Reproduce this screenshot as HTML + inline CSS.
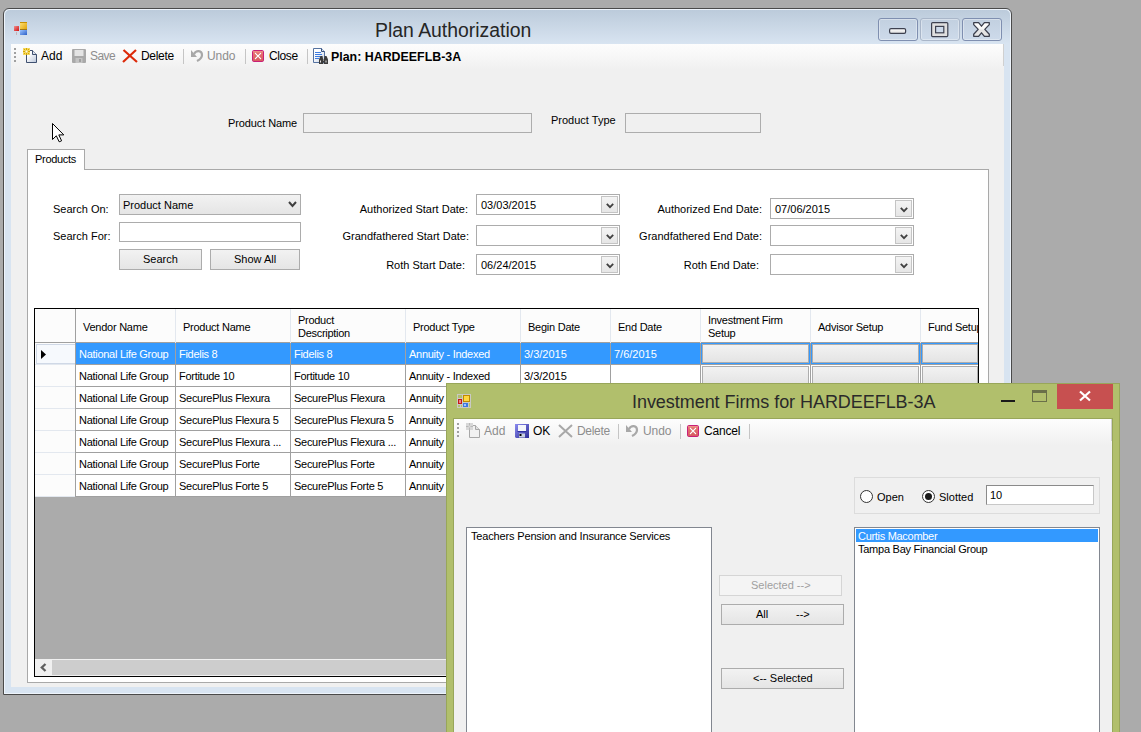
<!DOCTYPE html><html><head><meta charset="utf-8"><style>
html,body{margin:0;padding:0;}
body{width:1141px;height:732px;overflow:hidden;background:#ababab;position:relative;font-family:"Liberation Sans",sans-serif;}
.a{position:absolute;box-sizing:border-box;}
.t{position:absolute;white-space:pre;line-height:normal;font-family:"Liberation Sans",sans-serif;}
svg{position:absolute;overflow:visible;}
</style></head><body>
<div class="a" style="left:3px;top:8px;width:1009px;height:687px;border:1px solid #4a4a4a;border-radius:6px 6px 0 0;background:#d8e4f1;box-shadow:inset 0 0 0 1px #eef4fb;"></div>
<div class="a" style="left:5px;top:10px;width:1005px;height:34px;border-radius:5px 5px 0 0;background:linear-gradient(#bccbdb,#d8e4f1);"></div>
<div class="a" style="left:11px;top:44px;width:993px;height:643px;background:#f0f0f0;"></div>
<div class="a" style="left:11px;top:44px;width:993px;height:26px;background:linear-gradient(#fdfdfd 0%,#f8f8f8 40%,#f0f0f0 100%);"></div>
<div class="a" style="left:1003px;top:44px;width:1px;height:22px;background:#d0d0d0;"></div>
<svg style="left:14px;top:21px" width="14" height="15" viewBox="0 0 14 15"><defs><linearGradient id="gy" x1="0" y1="0" x2="1" y2="1"><stop offset="0" stop-color="#fde27a"/><stop offset="1" stop-color="#e0a000"/></linearGradient><linearGradient id="gb" x1="0" y1="0" x2="1" y2="1"><stop offset="0" stop-color="#9cc4ff"/><stop offset="1" stop-color="#2b5fc8"/></linearGradient><linearGradient id="gr" x1="0" y1="0" x2="1" y2="1"><stop offset="0" stop-color="#f09090"/><stop offset="1" stop-color="#d01010"/></linearGradient></defs><rect x="0" y="5" width="5" height="5" fill="url(#gr)"/><rect x="2" y="11" width="1" height="3" fill="#c8b4b8"/><rect x="6" y="1" width="7" height="8" fill="url(#gy)"/><rect x="6" y="1" width="7" height="1" fill="#c89000"/><rect x="6" y="8" width="7" height="1" fill="#a07818"/><rect x="6" y="9" width="7" height="5" fill="url(#gb)"/></svg>
<div class="t" style="left:375px;top:19px;font-size:19.4px;color:#262626;">Plan Authorization</div>
<div class="a" style="left:878px;top:18px;width:40px;height:23px;border:1px solid #7f8fb0;border-radius:3px;background:linear-gradient(#c2d0e0,#cddaea);box-shadow:inset 0 0 0 1px rgba(255,255,255,0.35);"></div>
<div class="a" style="left:920px;top:18px;width:40px;height:23px;border:1px solid #a9b6c9;border-radius:3px;background:linear-gradient(#c2d0e0,#cddaea);box-shadow:inset 0 0 0 1px rgba(255,255,255,0.35);"></div>
<div class="a" style="left:962px;top:18px;width:40px;height:23px;border:1px solid #7f8fb0;border-radius:3px;background:linear-gradient(#c2d0e0,#cddaea);box-shadow:inset 0 0 0 1px rgba(255,255,255,0.35);"></div>
<svg style="left:889px;top:28px" width="18" height="8"><defs><linearGradient id="gm" x1="0" y1="0" x2="0" y2="1"><stop offset="0" stop-color="#ffffff"/><stop offset="1" stop-color="#dedede"/></linearGradient></defs><rect x="0.6" y="0.6" width="16" height="4.8" rx="1.4" fill="url(#gm)" stroke="#3d4150" stroke-width="1.2"/></svg>
<svg style="left:931px;top:22px" width="18" height="16"><rect x="0.6" y="0.6" width="16.2" height="14" rx="1" fill="#dfdfdf" stroke="#3d4150" stroke-width="1.2"/><rect x="4.6" y="4.4" width="8.2" height="6.4" fill="#cddaea" stroke="#3d4150" stroke-width="1.2"/></svg>
<svg style="left:973px;top:22px" width="18" height="16" viewBox="0 0 18 16"><defs><linearGradient id="gx" x1="0" y1="0" x2="0" y2="1"><stop offset="0" stop-color="#ffffff"/><stop offset="0.45" stop-color="#f6f6f6"/><stop offset="0.55" stop-color="#e2e2e2"/><stop offset="1" stop-color="#e6e6e6"/></linearGradient></defs><path d="M0.7,0.7 L5.6,0.7 L8.5,4.2 L11.4,0.7 L16.3,0.7 L16.3,2.6 L11.8,7.4 L16.3,12.3 L16.3,14.3 L11.4,14.3 L8.5,10.8 L5.6,14.3 L0.7,14.3 L0.7,12.3 L5.2,7.4 L0.7,2.6 Z" fill="url(#gx)" stroke="#3b3f4d" stroke-width="1.3" stroke-linejoin="round"/></svg>
<div class="a" style="left:14px;top:48px;width:2px;height:2px;background:#a0a0a0;"></div>
<div class="a" style="left:14px;top:52px;width:2px;height:2px;background:#a0a0a0;"></div>
<div class="a" style="left:14px;top:56px;width:2px;height:2px;background:#a0a0a0;"></div>
<div class="a" style="left:14px;top:60px;width:2px;height:2px;background:#a0a0a0;"></div>
<svg style="left:22px;top:48px" width="16" height="16" viewBox="0 0 16 16"><defs><linearGradient id="gp" x1="0" y1="0" x2="1" y2="1"><stop offset="0.3" stop-color="#ffffff"/><stop offset="1" stop-color="#b8c4d8"/></linearGradient></defs><path d="M4.5,2.5 H10.5 L14.5,6.5 V14.5 H4.5 Z" fill="url(#gp)" stroke="#3f5070" stroke-width="1" stroke-linejoin="round"/><path d="M10.5,2.5 V6.5 H14.5" fill="#dde3ee" stroke="#3f5070" stroke-width="1"/><rect x="1" y="0" width="7" height="7" fill="#f4d860"/><g stroke="#d9a800" stroke-width="1"><path d="M4.5,0 V2.5 M4.5,4.5 V7 M1,3.5 H3.5 M5.5,3.5 H8 M2,1 L3.5,2.5 M7,1 L5.5,2.5 M2,6 L3.5,4.5 M7,6 L5.5,4.5"/></g><rect x="3.5" y="2.5" width="2" height="2" fill="#fffbe8"/></svg>
<div class="t" style="left:41px;top:49px;font-size:12px;color:#000;">Add</div>
<svg style="left:72px;top:49px" width="14" height="14" viewBox="0 0 14 14"><rect x="0" y="0" width="14" height="14" rx="1" fill="#a9a9a9"/><rect x="2.5" y="1" width="9" height="6" fill="#e4e4e4"/><rect x="3.5" y="9" width="7" height="5" fill="#c4c4c4"/><rect x="7" y="10" width="2" height="3" fill="#a0a0a0"/></svg>
<div class="t" style="left:90px;top:49px;font-size:12px;color:#8d8d8d;letter-spacing:-0.6px;">Save</div>
<svg style="left:122px;top:49px" width="16" height="14"><path d="M1.5,1 L15,13 M14,1 L1,13" stroke="#dc2a0a" stroke-width="2.2"/></svg>
<div class="t" style="left:141px;top:49px;font-size:12px;color:#000;letter-spacing:-0.3px;">Delete</div>
<div class="a" style="left:183px;top:49px;width:1px;height:15px;background:#c5c5c5;"></div>
<svg style="left:191px;top:49px" width="12" height="13" viewBox="0 0 12 13"><path d="M3,5 C5,1 11,1 11,6 C11,9 8,11 6,12" fill="none" stroke="#a8a8a8" stroke-width="2.2"/><path d="M0,1 L0,8 L6,8 Z" fill="#a8a8a8"/></svg>
<div class="t" style="left:207px;top:49px;font-size:12px;color:#8d8d8d;letter-spacing:-0.1px;">Undo</div>
<div class="a" style="left:245px;top:49px;width:1px;height:15px;background:#c5c5c5;"></div>
<svg style="left:252px;top:50px" width="12" height="12" viewBox="0 0 12 12"><defs><linearGradient id="gc" x1="0" y1="0" x2="0" y2="1"><stop offset="0" stop-color="#f0a090"/><stop offset="0.25" stop-color="#e87070"/><stop offset="1" stop-color="#d85a60"/></linearGradient></defs><rect x="0.5" y="0.5" width="11" height="11" rx="1.2" fill="url(#gc)" stroke="#c8207a" stroke-width="1"/><path d="M3,3 L9,9 M9,3 L3,9" stroke="#b04040" stroke-width="2.2" stroke-opacity="0.35"/><path d="M3,3 L9,9 M9,3 L3,9" stroke="#fff" stroke-width="1.1"/></svg>
<div class="t" style="left:269px;top:49px;font-size:12px;color:#000;letter-spacing:-0.4px;">Close</div>
<div class="a" style="left:307px;top:49px;width:1px;height:15px;background:#c5c5c5;"></div>
<svg style="left:313px;top:48px" width="16" height="16" viewBox="0 0 16 16"><defs><linearGradient id="gd" x1="0" y1="0" x2="1" y2="1"><stop offset="0.3" stop-color="#ffffff"/><stop offset="1" stop-color="#c4d0e4"/></linearGradient></defs><path d="M0.5,0.5 H8.5 L11.5,3.5 V14.5 H0.5 Z" fill="url(#gd)" stroke="#5572a0"/><path d="M8.5,0.5 V3.5 H11.5" fill="#dde4f0" stroke="#35507e"/><g stroke="#3d7be0" stroke-width="1"><path d="M2,4.5 H8 M2,6.5 H9 M2,8.5 H9 M2,10.5 H6"/></g><g fill="#3c3c3c"><path d="M6,16 V11.5 L7.5,8 H9.5 L10.2,11.5 V16 Z"/><path d="M10.8,16 V11.5 L11.5,8 H13.5 L15,11.5 V16 Z"/><rect x="9.5" y="11" width="2" height="3"/></g><g fill="#e8e8e8"><rect x="7" y="12.5" width="1" height="2"/><rect x="12.5" y="12.5" width="1" height="2"/><rect x="10" y="11.5" width="1" height="1"/></g></svg>
<div class="t" style="left:331px;top:50px;font-size:12.4px;color:#000;font-weight:700;">Plan: HARDEEFLB-3A</div>
<svg style="left:52px;top:123px" width="14" height="20" viewBox="0 0 14 20"><path d="M0.5,0.5 L0.5,16.5 L4.3,12.8 L7.2,18.8 L9.6,17.8 L6.8,11.9 L11.8,11.9 Z" fill="#fff" stroke="#000" stroke-width="1" stroke-linejoin="round"/></svg>
<div class="t" style="left:228px;top:117px;font-size:11px;color:#000;letter-spacing:-0.1px;">Product Name</div>
<div class="a" style="left:303px;top:113px;width:229px;height:20px;border:1px solid #adadad;background:#f0f0f0;"></div>
<div class="t" style="left:551px;top:114px;font-size:11px;color:#000;">Product Type</div>
<div class="a" style="left:625px;top:113px;width:136px;height:20px;border:1px solid #adadad;background:#f0f0f0;"></div>
<div class="a" style="left:27px;top:169px;width:962px;height:514px;border:1px solid #a9a9a9;background:#fff;"></div>
<div class="a" style="left:27px;top:149px;width:58px;height:21px;border:1px solid #a9a9a9;border-bottom:none;background:#fff;"></div>
<div class="t" style="left:35px;top:153px;font-size:11px;color:#000;letter-spacing:-0.3px;">Products</div>
<div class="t" style="left:53px;top:203px;font-size:11px;color:#000;">Search On:</div>
<div class="a" style="left:119px;top:194px;width:182px;height:21px;border:1px solid #acacac;background:linear-gradient(#f2f2f2,#e5e5e5);"></div>
<div class="t" style="left:123px;top:199px;font-size:11px;color:#000;">Product Name</div>
<svg style="left:288px;top:201px" width="9" height="7"><path d="M1,1 L4.5,5 L8,1" fill="none" stroke="#404040" stroke-width="2"/></svg>
<div class="t" style="left:53px;top:230px;font-size:11px;color:#000;">Search For:</div>
<div class="a" style="left:119px;top:222px;width:182px;height:20px;border:1px solid #acacac;background:#fff;"></div>
<div class="a" style="left:119px;top:249px;width:83px;height:21px;border:1px solid #acacac;background:linear-gradient(#f2f2f2,#e5e5e5);"></div>
<div class="t" style="left:143px;top:253px;font-size:11px;color:#000;">Search</div>
<div class="a" style="left:210px;top:249px;width:90px;height:21px;border:1px solid #acacac;background:linear-gradient(#f2f2f2,#e5e5e5);"></div>
<div class="t" style="left:234px;top:253px;font-size:11px;color:#000;">Show All</div>
<div class="t" style="right:673px;top:203px;font-size:11px;color:#000;">Authorized Start Date:</div>
<div class="t" style="right:672px;top:230px;font-size:11px;color:#000;">Grandfathered Start Date:</div>
<div class="t" style="right:676px;top:259px;font-size:11px;color:#000;">Roth Start Date:</div>
<div class="a" style="left:476px;top:194px;width:144px;height:21px;border:1px solid #acacac;background:#fff;"></div>
<div class="a" style="left:601px;top:196px;width:17px;height:17px;border:1px solid #c4c4c4;background:linear-gradient(#f4f4f4,#e6e6e6);"></div>
<svg style="left:606px;top:203px" width="8" height="6"><path d="M0.8,0.8 L4,4.2 L7.2,0.8" fill="none" stroke="#404040" stroke-width="1.8"/></svg>
<div class="t" style="left:481px;top:199px;font-size:11px;color:#000;">03/03/2015</div>
<div class="a" style="left:476px;top:225px;width:144px;height:21px;border:1px solid #acacac;background:#fff;"></div>
<div class="a" style="left:601px;top:227px;width:17px;height:17px;border:1px solid #c4c4c4;background:linear-gradient(#f4f4f4,#e6e6e6);"></div>
<svg style="left:606px;top:234px" width="8" height="6"><path d="M0.8,0.8 L4,4.2 L7.2,0.8" fill="none" stroke="#404040" stroke-width="1.8"/></svg>
<div class="a" style="left:476px;top:254px;width:144px;height:21px;border:1px solid #acacac;background:#fff;"></div>
<div class="a" style="left:601px;top:256px;width:17px;height:17px;border:1px solid #c4c4c4;background:linear-gradient(#f4f4f4,#e6e6e6);"></div>
<svg style="left:606px;top:263px" width="8" height="6"><path d="M0.8,0.8 L4,4.2 L7.2,0.8" fill="none" stroke="#404040" stroke-width="1.8"/></svg>
<div class="t" style="left:481px;top:259px;font-size:11px;color:#000;">06/24/2015</div>
<div class="t" style="right:379px;top:203px;font-size:11px;color:#000;">Authorized End Date:</div>
<div class="t" style="right:379px;top:230px;font-size:11px;color:#000;">Grandfathered End Date:</div>
<div class="t" style="right:382px;top:259px;font-size:11px;color:#000;">Roth End Date:</div>
<div class="a" style="left:770px;top:198px;width:144px;height:21px;border:1px solid #acacac;background:#fff;"></div>
<div class="a" style="left:895px;top:200px;width:17px;height:17px;border:1px solid #c4c4c4;background:linear-gradient(#f4f4f4,#e6e6e6);"></div>
<svg style="left:900px;top:207px" width="8" height="6"><path d="M0.8,0.8 L4,4.2 L7.2,0.8" fill="none" stroke="#404040" stroke-width="1.8"/></svg>
<div class="t" style="left:775px;top:203px;font-size:11px;color:#000;">07/06/2015</div>
<div class="a" style="left:770px;top:225px;width:144px;height:21px;border:1px solid #acacac;background:#fff;"></div>
<div class="a" style="left:895px;top:227px;width:17px;height:17px;border:1px solid #c4c4c4;background:linear-gradient(#f4f4f4,#e6e6e6);"></div>
<svg style="left:900px;top:234px" width="8" height="6"><path d="M0.8,0.8 L4,4.2 L7.2,0.8" fill="none" stroke="#404040" stroke-width="1.8"/></svg>
<div class="a" style="left:770px;top:254px;width:144px;height:21px;border:1px solid #acacac;background:#fff;"></div>
<div class="a" style="left:895px;top:256px;width:17px;height:17px;border:1px solid #c4c4c4;background:linear-gradient(#f4f4f4,#e6e6e6);"></div>
<svg style="left:900px;top:263px" width="8" height="6"><path d="M0.8,0.8 L4,4.2 L7.2,0.8" fill="none" stroke="#404040" stroke-width="1.8"/></svg>
<div class="a" style="left:34px;top:308px;width:945px;height:369px;border:1px solid #000;background:#ababab;"></div>
<div class="a" style="left:0;top:0;width:1141px;height:732px;clip-path:inset(309px 163px 56px 35px);">
<div class="a" style="left:35px;top:309px;width:943px;height:34px;background:#fcfcfc;border-bottom:1px solid #a0a0a0;"></div>
<div class="a" style="left:75px;top:309px;width:1px;height:34px;background:#e3e8ef;"></div>
<div class="a" style="left:175px;top:309px;width:1px;height:34px;background:#e3e8ef;"></div>
<div class="a" style="left:290px;top:309px;width:1px;height:34px;background:#e3e8ef;"></div>
<div class="a" style="left:405px;top:309px;width:1px;height:34px;background:#e3e8ef;"></div>
<div class="a" style="left:520px;top:309px;width:1px;height:34px;background:#e3e8ef;"></div>
<div class="a" style="left:610px;top:309px;width:1px;height:34px;background:#e3e8ef;"></div>
<div class="a" style="left:700px;top:309px;width:1px;height:34px;background:#e3e8ef;"></div>
<div class="a" style="left:810px;top:309px;width:1px;height:34px;background:#e3e8ef;"></div>
<div class="a" style="left:920px;top:309px;width:1px;height:34px;background:#e3e8ef;"></div>
<div class="a" style="left:75px;top:309px;width:1px;height:34px;background:#a0a0a0;"></div>
<div class="t" style="left:83px;top:321px;font-size:11px;color:#000;letter-spacing:-0.25px;">Vendor Name</div>
<div class="t" style="left:183px;top:321px;font-size:11px;color:#000;letter-spacing:-0.25px;">Product Name</div>
<div class="t" style="left:413px;top:321px;font-size:11px;color:#000;letter-spacing:-0.25px;">Product Type</div>
<div class="t" style="left:528px;top:321px;font-size:11px;color:#000;letter-spacing:-0.25px;">Begin Date</div>
<div class="t" style="left:618px;top:321px;font-size:11px;color:#000;letter-spacing:-0.25px;">End Date</div>
<div class="t" style="left:818px;top:321px;font-size:11px;color:#000;letter-spacing:-0.25px;">Advisor Setup</div>
<div class="t" style="left:928px;top:321px;font-size:11px;color:#000;letter-spacing:-0.25px;">Fund Setup</div>
<div class="t" style="left:298px;top:314px;font-size:11px;color:#000;letter-spacing:-0.28px;">Product</div>
<div class="t" style="left:298px;top:327px;font-size:11px;color:#000;letter-spacing:-0.28px;">Description</div>
<div class="t" style="left:708px;top:314px;font-size:11px;color:#000;letter-spacing:-0.28px;">Investment Firm</div>
<div class="t" style="left:708px;top:327px;font-size:11px;color:#000;letter-spacing:-0.28px;">Setup</div>
<div class="a" style="left:35px;top:343px;width:40px;height:22px;background:#fcfcfc;border-bottom:1px solid #e3e8ef;"></div>
<div class="a" style="left:75px;top:343px;width:1px;height:22px;background:#a0a0a0;"></div>
<div class="a" style="left:76px;top:343px;width:902px;height:22px;background:#3399ff;border-bottom:1px solid #a0a0a0;"></div>
<div class="a" style="left:175px;top:343px;width:1px;height:22px;background:#a0a0a0;"></div>
<div class="a" style="left:290px;top:343px;width:1px;height:22px;background:#a0a0a0;"></div>
<div class="a" style="left:405px;top:343px;width:1px;height:22px;background:#a0a0a0;"></div>
<div class="a" style="left:520px;top:343px;width:1px;height:22px;background:#a0a0a0;"></div>
<div class="a" style="left:610px;top:343px;width:1px;height:22px;background:#a0a0a0;"></div>
<div class="a" style="left:700px;top:343px;width:1px;height:22px;background:#a0a0a0;"></div>
<div class="a" style="left:810px;top:343px;width:1px;height:22px;background:#a0a0a0;"></div>
<div class="a" style="left:920px;top:343px;width:1px;height:22px;background:#a0a0a0;"></div>
<div class="t" style="left:79px;top:348px;font-size:11px;color:#fff;letter-spacing:-0.28px;">National Life Group</div>
<div class="t" style="left:179px;top:348px;font-size:11px;color:#fff;letter-spacing:-0.28px;">Fidelis 8</div>
<div class="t" style="left:294px;top:348px;font-size:11px;color:#fff;letter-spacing:-0.28px;">Fidelis 8</div>
<div class="t" style="left:409px;top:348px;font-size:11px;color:#fff;letter-spacing:-0.28px;">Annuity - Indexed</div>
<div class="t" style="left:524px;top:348px;font-size:11px;color:#fff;letter-spacing:0px;">3/3/2015</div>
<div class="t" style="left:614px;top:348px;font-size:11px;color:#fff;letter-spacing:0px;">7/6/2015</div>
<div class="a" style="left:702px;top:344px;width:107px;height:19px;border:1px solid #adadad;background:linear-gradient(#f2f2f2,#e4e4e4);outline:1px solid #3399ff;"></div>
<div class="a" style="left:812px;top:344px;width:107px;height:19px;border:1px solid #adadad;background:linear-gradient(#f2f2f2,#e4e4e4);outline:1px solid #3399ff;"></div>
<div class="a" style="left:922px;top:344px;width:56px;height:19px;border:1px solid #adadad;background:linear-gradient(#f2f2f2,#e4e4e4);outline:1px solid #3399ff;"></div>
<div class="a" style="left:35px;top:365px;width:40px;height:22px;background:#fcfcfc;border-bottom:1px solid #e3e8ef;"></div>
<div class="a" style="left:75px;top:365px;width:1px;height:22px;background:#a0a0a0;"></div>
<div class="a" style="left:76px;top:365px;width:902px;height:22px;background:#fff;border-bottom:1px solid #a0a0a0;"></div>
<div class="a" style="left:175px;top:365px;width:1px;height:22px;background:#a0a0a0;"></div>
<div class="a" style="left:290px;top:365px;width:1px;height:22px;background:#a0a0a0;"></div>
<div class="a" style="left:405px;top:365px;width:1px;height:22px;background:#a0a0a0;"></div>
<div class="a" style="left:520px;top:365px;width:1px;height:22px;background:#a0a0a0;"></div>
<div class="a" style="left:610px;top:365px;width:1px;height:22px;background:#a0a0a0;"></div>
<div class="a" style="left:700px;top:365px;width:1px;height:22px;background:#a0a0a0;"></div>
<div class="a" style="left:810px;top:365px;width:1px;height:22px;background:#a0a0a0;"></div>
<div class="a" style="left:920px;top:365px;width:1px;height:22px;background:#a0a0a0;"></div>
<div class="t" style="left:79px;top:370px;font-size:11px;color:#000;letter-spacing:-0.28px;">National Life Group</div>
<div class="t" style="left:179px;top:370px;font-size:11px;color:#000;letter-spacing:-0.28px;">Fortitude 10</div>
<div class="t" style="left:294px;top:370px;font-size:11px;color:#000;letter-spacing:-0.28px;">Fortitude 10</div>
<div class="t" style="left:409px;top:370px;font-size:11px;color:#000;letter-spacing:-0.28px;">Annuity - Indexed</div>
<div class="t" style="left:524px;top:370px;font-size:11px;color:#000;letter-spacing:0px;">3/3/2015</div>
<div class="a" style="left:702px;top:366px;width:107px;height:19px;border:1px solid #adadad;background:linear-gradient(#f2f2f2,#e4e4e4);"></div>
<div class="a" style="left:812px;top:366px;width:107px;height:19px;border:1px solid #adadad;background:linear-gradient(#f2f2f2,#e4e4e4);"></div>
<div class="a" style="left:922px;top:366px;width:56px;height:19px;border:1px solid #adadad;background:linear-gradient(#f2f2f2,#e4e4e4);"></div>
<div class="a" style="left:35px;top:387px;width:40px;height:22px;background:#fcfcfc;border-bottom:1px solid #e3e8ef;"></div>
<div class="a" style="left:75px;top:387px;width:1px;height:22px;background:#a0a0a0;"></div>
<div class="a" style="left:76px;top:387px;width:902px;height:22px;background:#fff;border-bottom:1px solid #a0a0a0;"></div>
<div class="a" style="left:175px;top:387px;width:1px;height:22px;background:#a0a0a0;"></div>
<div class="a" style="left:290px;top:387px;width:1px;height:22px;background:#a0a0a0;"></div>
<div class="a" style="left:405px;top:387px;width:1px;height:22px;background:#a0a0a0;"></div>
<div class="a" style="left:520px;top:387px;width:1px;height:22px;background:#a0a0a0;"></div>
<div class="a" style="left:610px;top:387px;width:1px;height:22px;background:#a0a0a0;"></div>
<div class="a" style="left:700px;top:387px;width:1px;height:22px;background:#a0a0a0;"></div>
<div class="a" style="left:810px;top:387px;width:1px;height:22px;background:#a0a0a0;"></div>
<div class="a" style="left:920px;top:387px;width:1px;height:22px;background:#a0a0a0;"></div>
<div class="t" style="left:79px;top:392px;font-size:11px;color:#000;letter-spacing:-0.28px;">National Life Group</div>
<div class="t" style="left:179px;top:392px;font-size:11px;color:#000;letter-spacing:-0.28px;">SecurePlus Flexura</div>
<div class="t" style="left:294px;top:392px;font-size:11px;color:#000;letter-spacing:-0.28px;">SecurePlus Flexura</div>
<div class="t" style="left:409px;top:392px;font-size:11px;color:#000;letter-spacing:-0.28px;">Annuity - Indexed</div>
<div class="t" style="left:524px;top:392px;font-size:11px;color:#000;letter-spacing:0px;">3/3/2015</div>
<div class="a" style="left:702px;top:388px;width:107px;height:19px;border:1px solid #adadad;background:linear-gradient(#f2f2f2,#e4e4e4);"></div>
<div class="a" style="left:812px;top:388px;width:107px;height:19px;border:1px solid #adadad;background:linear-gradient(#f2f2f2,#e4e4e4);"></div>
<div class="a" style="left:922px;top:388px;width:56px;height:19px;border:1px solid #adadad;background:linear-gradient(#f2f2f2,#e4e4e4);"></div>
<div class="a" style="left:35px;top:409px;width:40px;height:22px;background:#fcfcfc;border-bottom:1px solid #e3e8ef;"></div>
<div class="a" style="left:75px;top:409px;width:1px;height:22px;background:#a0a0a0;"></div>
<div class="a" style="left:76px;top:409px;width:902px;height:22px;background:#fff;border-bottom:1px solid #a0a0a0;"></div>
<div class="a" style="left:175px;top:409px;width:1px;height:22px;background:#a0a0a0;"></div>
<div class="a" style="left:290px;top:409px;width:1px;height:22px;background:#a0a0a0;"></div>
<div class="a" style="left:405px;top:409px;width:1px;height:22px;background:#a0a0a0;"></div>
<div class="a" style="left:520px;top:409px;width:1px;height:22px;background:#a0a0a0;"></div>
<div class="a" style="left:610px;top:409px;width:1px;height:22px;background:#a0a0a0;"></div>
<div class="a" style="left:700px;top:409px;width:1px;height:22px;background:#a0a0a0;"></div>
<div class="a" style="left:810px;top:409px;width:1px;height:22px;background:#a0a0a0;"></div>
<div class="a" style="left:920px;top:409px;width:1px;height:22px;background:#a0a0a0;"></div>
<div class="t" style="left:79px;top:414px;font-size:11px;color:#000;letter-spacing:-0.28px;">National Life Group</div>
<div class="t" style="left:179px;top:414px;font-size:11px;color:#000;letter-spacing:-0.28px;">SecurePlus Flexura 5</div>
<div class="t" style="left:294px;top:414px;font-size:11px;color:#000;letter-spacing:-0.28px;">SecurePlus Flexura 5</div>
<div class="t" style="left:409px;top:414px;font-size:11px;color:#000;letter-spacing:-0.28px;">Annuity - Indexed</div>
<div class="t" style="left:524px;top:414px;font-size:11px;color:#000;letter-spacing:0px;">3/3/2015</div>
<div class="a" style="left:702px;top:410px;width:107px;height:19px;border:1px solid #adadad;background:linear-gradient(#f2f2f2,#e4e4e4);"></div>
<div class="a" style="left:812px;top:410px;width:107px;height:19px;border:1px solid #adadad;background:linear-gradient(#f2f2f2,#e4e4e4);"></div>
<div class="a" style="left:922px;top:410px;width:56px;height:19px;border:1px solid #adadad;background:linear-gradient(#f2f2f2,#e4e4e4);"></div>
<div class="a" style="left:35px;top:431px;width:40px;height:22px;background:#fcfcfc;border-bottom:1px solid #e3e8ef;"></div>
<div class="a" style="left:75px;top:431px;width:1px;height:22px;background:#a0a0a0;"></div>
<div class="a" style="left:76px;top:431px;width:902px;height:22px;background:#fff;border-bottom:1px solid #a0a0a0;"></div>
<div class="a" style="left:175px;top:431px;width:1px;height:22px;background:#a0a0a0;"></div>
<div class="a" style="left:290px;top:431px;width:1px;height:22px;background:#a0a0a0;"></div>
<div class="a" style="left:405px;top:431px;width:1px;height:22px;background:#a0a0a0;"></div>
<div class="a" style="left:520px;top:431px;width:1px;height:22px;background:#a0a0a0;"></div>
<div class="a" style="left:610px;top:431px;width:1px;height:22px;background:#a0a0a0;"></div>
<div class="a" style="left:700px;top:431px;width:1px;height:22px;background:#a0a0a0;"></div>
<div class="a" style="left:810px;top:431px;width:1px;height:22px;background:#a0a0a0;"></div>
<div class="a" style="left:920px;top:431px;width:1px;height:22px;background:#a0a0a0;"></div>
<div class="t" style="left:79px;top:436px;font-size:11px;color:#000;letter-spacing:-0.28px;">National Life Group</div>
<div class="t" style="left:179px;top:436px;font-size:11px;color:#000;letter-spacing:-0.28px;">SecurePlus Flexura ...</div>
<div class="t" style="left:294px;top:436px;font-size:11px;color:#000;letter-spacing:-0.28px;">SecurePlus Flexura ...</div>
<div class="t" style="left:409px;top:436px;font-size:11px;color:#000;letter-spacing:-0.28px;">Annuity - Indexed</div>
<div class="t" style="left:524px;top:436px;font-size:11px;color:#000;letter-spacing:0px;">3/3/2015</div>
<div class="a" style="left:702px;top:432px;width:107px;height:19px;border:1px solid #adadad;background:linear-gradient(#f2f2f2,#e4e4e4);"></div>
<div class="a" style="left:812px;top:432px;width:107px;height:19px;border:1px solid #adadad;background:linear-gradient(#f2f2f2,#e4e4e4);"></div>
<div class="a" style="left:922px;top:432px;width:56px;height:19px;border:1px solid #adadad;background:linear-gradient(#f2f2f2,#e4e4e4);"></div>
<div class="a" style="left:35px;top:453px;width:40px;height:22px;background:#fcfcfc;border-bottom:1px solid #e3e8ef;"></div>
<div class="a" style="left:75px;top:453px;width:1px;height:22px;background:#a0a0a0;"></div>
<div class="a" style="left:76px;top:453px;width:902px;height:22px;background:#fff;border-bottom:1px solid #a0a0a0;"></div>
<div class="a" style="left:175px;top:453px;width:1px;height:22px;background:#a0a0a0;"></div>
<div class="a" style="left:290px;top:453px;width:1px;height:22px;background:#a0a0a0;"></div>
<div class="a" style="left:405px;top:453px;width:1px;height:22px;background:#a0a0a0;"></div>
<div class="a" style="left:520px;top:453px;width:1px;height:22px;background:#a0a0a0;"></div>
<div class="a" style="left:610px;top:453px;width:1px;height:22px;background:#a0a0a0;"></div>
<div class="a" style="left:700px;top:453px;width:1px;height:22px;background:#a0a0a0;"></div>
<div class="a" style="left:810px;top:453px;width:1px;height:22px;background:#a0a0a0;"></div>
<div class="a" style="left:920px;top:453px;width:1px;height:22px;background:#a0a0a0;"></div>
<div class="t" style="left:79px;top:458px;font-size:11px;color:#000;letter-spacing:-0.28px;">National Life Group</div>
<div class="t" style="left:179px;top:458px;font-size:11px;color:#000;letter-spacing:-0.28px;">SecurePlus Forte</div>
<div class="t" style="left:294px;top:458px;font-size:11px;color:#000;letter-spacing:-0.28px;">SecurePlus Forte</div>
<div class="t" style="left:409px;top:458px;font-size:11px;color:#000;letter-spacing:-0.28px;">Annuity - Indexed</div>
<div class="t" style="left:524px;top:458px;font-size:11px;color:#000;letter-spacing:0px;">3/3/2015</div>
<div class="a" style="left:702px;top:454px;width:107px;height:19px;border:1px solid #adadad;background:linear-gradient(#f2f2f2,#e4e4e4);"></div>
<div class="a" style="left:812px;top:454px;width:107px;height:19px;border:1px solid #adadad;background:linear-gradient(#f2f2f2,#e4e4e4);"></div>
<div class="a" style="left:922px;top:454px;width:56px;height:19px;border:1px solid #adadad;background:linear-gradient(#f2f2f2,#e4e4e4);"></div>
<div class="a" style="left:35px;top:475px;width:40px;height:22px;background:#fcfcfc;border-bottom:1px solid #e3e8ef;"></div>
<div class="a" style="left:75px;top:475px;width:1px;height:22px;background:#a0a0a0;"></div>
<div class="a" style="left:76px;top:475px;width:902px;height:22px;background:#fff;border-bottom:1px solid #a0a0a0;"></div>
<div class="a" style="left:175px;top:475px;width:1px;height:22px;background:#a0a0a0;"></div>
<div class="a" style="left:290px;top:475px;width:1px;height:22px;background:#a0a0a0;"></div>
<div class="a" style="left:405px;top:475px;width:1px;height:22px;background:#a0a0a0;"></div>
<div class="a" style="left:520px;top:475px;width:1px;height:22px;background:#a0a0a0;"></div>
<div class="a" style="left:610px;top:475px;width:1px;height:22px;background:#a0a0a0;"></div>
<div class="a" style="left:700px;top:475px;width:1px;height:22px;background:#a0a0a0;"></div>
<div class="a" style="left:810px;top:475px;width:1px;height:22px;background:#a0a0a0;"></div>
<div class="a" style="left:920px;top:475px;width:1px;height:22px;background:#a0a0a0;"></div>
<div class="t" style="left:79px;top:480px;font-size:11px;color:#000;letter-spacing:-0.28px;">National Life Group</div>
<div class="t" style="left:179px;top:480px;font-size:11px;color:#000;letter-spacing:-0.28px;">SecurePlus Forte 5</div>
<div class="t" style="left:294px;top:480px;font-size:11px;color:#000;letter-spacing:-0.28px;">SecurePlus Forte 5</div>
<div class="t" style="left:409px;top:480px;font-size:11px;color:#000;letter-spacing:-0.28px;">Annuity - Indexed</div>
<div class="t" style="left:524px;top:480px;font-size:11px;color:#000;letter-spacing:0px;">3/3/2015</div>
<div class="a" style="left:702px;top:476px;width:107px;height:19px;border:1px solid #adadad;background:linear-gradient(#f2f2f2,#e4e4e4);"></div>
<div class="a" style="left:812px;top:476px;width:107px;height:19px;border:1px solid #adadad;background:linear-gradient(#f2f2f2,#e4e4e4);"></div>
<div class="a" style="left:922px;top:476px;width:56px;height:19px;border:1px solid #adadad;background:linear-gradient(#f2f2f2,#e4e4e4);"></div>
</div>
<div class="a" style="left:36px;top:344px;width:39px;height:20px;border:1px solid #cfd8e6;border-right:none;background:#f6f9fd;"></div>
<svg style="left:41px;top:350px" width="6" height="9"><path d="M0,0 L5,4.5 L0,9 Z" fill="#000"/></svg>
<div class="a" style="left:35px;top:659px;width:943px;height:17px;background:#f0f0f0;"></div>
<div class="a" style="left:52px;top:660px;width:926px;height:15px;background:#cdcdcd;"></div>
<svg style="left:40px;top:663px" width="7" height="9"><path d="M5.5,1 L1.8,4.5 L5.5,8" fill="none" stroke="#606060" stroke-width="2.3"/></svg>
<div class="a" style="left:446px;top:383px;width:674px;height:360px;background:#b1bf6c;border:1px solid #98a65a;"></div>
<div class="a" style="left:453px;top:418px;width:660px;height:330px;background:#98a65a;"></div>
<svg style="left:457px;top:394px" width="14" height="14" viewBox="0 0 14 14"><rect x="0" y="0" width="14" height="14" fill="#c9cac4"/><rect x="1" y="1" width="4" height="3" fill="#b1bf6c"/><rect x="1" y="11" width="2" height="2" fill="#b1bf6c"/><rect x="4" y="11" width="1" height="2" fill="#b1bf6c"/><rect x="12" y="9" width="1" height="4" fill="#b1bf6c"/><rect x="1" y="5" width="4" height="5" fill="#c41818"/><rect x="2" y="6" width="2" height="3" fill="#f08080"/><rect x="6" y="1" width="7" height="7" fill="#c08a00"/><rect x="7" y="2" width="5" height="5" fill="#ffd840"/><rect x="6" y="9" width="5" height="4" fill="#3d78e0"/><rect x="7" y="10" width="2" height="2" fill="#a0c4ff"/></svg>
<div class="t" style="left:632px;top:392px;font-size:18px;color:#2a2a2a;letter-spacing:-0.05px;">Investment Firms for HARDEEFLB-3A</div>
<div class="a" style="left:1001px;top:400px;width:14px;height:2px;background:#1a1a1a;"></div>
<div class="a" style="left:1032px;top:390px;width:15px;height:12px;border:1px solid #6a7049;border-top-width:3px;"></div>
<div class="a" style="left:1057px;top:384px;width:56px;height:25px;background:#c75050;"></div>
<svg style="left:1079px;top:391px" width="12" height="10"><path d="M1,0.5 L11,9.5 M11,0.5 L1,9.5" stroke="#fff" stroke-width="2.2"/></svg>
<div class="a" style="left:454px;top:419px;width:658px;height:320px;background:#f0f0f0;"></div>
<div class="a" style="left:454px;top:419px;width:658px;height:26px;background:linear-gradient(#fdfdfd 0%,#f8f8f8 40%,#f0f0f0 100%);"></div>
<div class="a" style="left:1111px;top:419px;width:1px;height:22px;background:#d0d0d0;"></div>
<div class="a" style="left:457px;top:423px;width:2px;height:2px;background:#a0a0a0;"></div>
<div class="a" style="left:457px;top:427px;width:2px;height:2px;background:#a0a0a0;"></div>
<div class="a" style="left:457px;top:431px;width:2px;height:2px;background:#a0a0a0;"></div>
<div class="a" style="left:457px;top:435px;width:2px;height:2px;background:#a0a0a0;"></div>
<svg style="left:465px;top:423px" width="16" height="16" viewBox="0 0 16 16"><path d="M4.5,2.5 H10.5 L14.5,6.5 V14.5 H4.5 Z" fill="#f2f2f2" stroke="#a8a8a8" stroke-width="1" stroke-linejoin="round"/><path d="M10.5,2.5 V6.5 H14.5" fill="#e0e0e0" stroke="#a8a8a8" stroke-width="1"/><rect x="1" y="0" width="7" height="7" fill="#d8d8d8"/><g stroke="#b8b8b8" stroke-width="1"><path d="M4.5,0 V2.5 M4.5,4.5 V7 M1,3.5 H3.5 M5.5,3.5 H8"/></g></svg>
<div class="t" style="left:484px;top:424px;font-size:12px;color:#8d8d8d;">Add</div>
<svg style="left:515px;top:424px" width="14" height="14" viewBox="0 0 14 14"><defs><linearGradient id="gf" x1="0" y1="0" x2="1" y2="1"><stop offset="0" stop-color="#8c8cf0"/><stop offset="1" stop-color="#2e2e98"/></linearGradient></defs><path d="M0,0 H14 V14 H1 L0,13 Z" fill="url(#gf)"/><rect x="3" y="1" width="8" height="6" fill="#f4f6fb"/><rect x="2.5" y="7" width="9" height="1" fill="#3030a0"/><rect x="4" y="9.5" width="6" height="4" fill="#c8d0e0"/><rect x="4.5" y="10" width="2" height="2" fill="#000"/></svg>
<div class="t" style="left:533px;top:424px;font-size:12px;color:#000;">OK</div>
<svg style="left:558px;top:424px" width="15" height="14"><path d="M1,1 L14,13 M14,1 L1,13" stroke="#a8a8a8" stroke-width="2"/></svg>
<div class="t" style="left:577px;top:424px;font-size:12px;color:#8d8d8d;letter-spacing:-0.3px;">Delete</div>
<div class="a" style="left:618px;top:424px;width:1px;height:15px;background:#c5c5c5;"></div>
<svg style="left:626px;top:424px" width="12" height="13" viewBox="0 0 12 13"><path d="M3,5 C5,1 11,1 11,6 C11,9 8,11 6,12" fill="none" stroke="#a8a8a8" stroke-width="2.2"/><path d="M0,1 L0,8 L6,8 Z" fill="#a8a8a8"/></svg>
<div class="t" style="left:643px;top:424px;font-size:12px;color:#8d8d8d;letter-spacing:-0.1px;">Undo</div>
<div class="a" style="left:680px;top:424px;width:1px;height:15px;background:#c5c5c5;"></div>
<svg style="left:687px;top:425px" width="12" height="12" viewBox="0 0 12 12"><defs><linearGradient id="gc2" x1="0" y1="0" x2="0" y2="1"><stop offset="0" stop-color="#f0a090"/><stop offset="0.25" stop-color="#e87070"/><stop offset="1" stop-color="#d85a60"/></linearGradient></defs><rect x="0.5" y="0.5" width="11" height="11" rx="1.2" fill="url(#gc2)" stroke="#c8207a" stroke-width="1"/><path d="M3,3 L9,9 M9,3 L3,9" stroke="#b04040" stroke-width="2.2" stroke-opacity="0.35"/><path d="M3,3 L9,9 M9,3 L3,9" stroke="#fff" stroke-width="1.1"/></svg>
<div class="t" style="left:704px;top:424px;font-size:12px;color:#000;letter-spacing:-0.2px;">Cancel</div>
<div class="a" style="left:749px;top:424px;width:1px;height:15px;background:#c5c5c5;"></div>
<div class="a" style="left:854px;top:477px;width:246px;height:37px;border:1px solid #dcdcdc;"></div>
<svg style="left:860px;top:490px" width="13" height="13"><circle cx="6.5" cy="6.5" r="6" fill="#fff" stroke="#333" stroke-width="1"/></svg>
<div class="t" style="left:877px;top:491px;font-size:11px;color:#000;">Open</div>
<svg style="left:922px;top:490px" width="13" height="13"><circle cx="6.5" cy="6.5" r="6" fill="#fff" stroke="#333" stroke-width="1"/><circle cx="6.5" cy="6.5" r="3.5" fill="#1a1a1a"/></svg>
<div class="t" style="left:939px;top:491px;font-size:11px;color:#000;">Slotted</div>
<div class="a" style="left:986px;top:485px;width:108px;height:20px;border:1px solid #7a7a7a;border-color:#8a8a8a #c8c8c8 #c8c8c8 #8a8a8a;background:#fff;"></div>
<div class="t" style="left:990px;top:489px;font-size:11px;color:#000;">10</div>
<div class="a" style="left:466px;top:527px;width:246px;height:220px;border:1px solid #828790;background:#fff;"></div>
<div class="t" style="left:471px;top:530px;font-size:11px;color:#000;letter-spacing:-0.16px;">Teachers Pension and Insurance Services</div>
<div class="a" style="left:854px;top:527px;width:246px;height:220px;border:1px solid #828790;background:#fff;"></div>
<div class="a" style="left:856px;top:529px;width:242px;height:13px;background:#3399ff;"></div>
<div class="t" style="left:858px;top:530px;font-size:11px;color:#fff;letter-spacing:-0.3px;">Curtis Macomber</div>
<div class="t" style="left:858px;top:543px;font-size:11px;color:#000;letter-spacing:-0.25px;">Tampa Bay Financial Group</div>
<div class="a" style="left:719px;top:575px;width:123px;height:21px;border:1px solid #d5d5d5;background:#f4f4f4;"></div>
<div class="t" style="left:751px;top:579px;font-size:11px;color:#a0a0a0;">Selected --&gt;</div>
<div class="a" style="left:721px;top:604px;width:123px;height:21px;border:1px solid #acacac;background:linear-gradient(#f2f2f2,#e5e5e5);"></div>
<div class="t" style="left:756px;top:608px;font-size:11px;color:#000;">All</div>
<div class="t" style="left:796px;top:608px;font-size:11px;color:#000;">--&gt;</div>
<div class="a" style="left:721px;top:668px;width:123px;height:21px;border:1px solid #acacac;background:linear-gradient(#f2f2f2,#e5e5e5);"></div>
<div class="t" style="left:753px;top:672px;font-size:11px;color:#000;">&lt;-- Selected</div>
</body></html>
